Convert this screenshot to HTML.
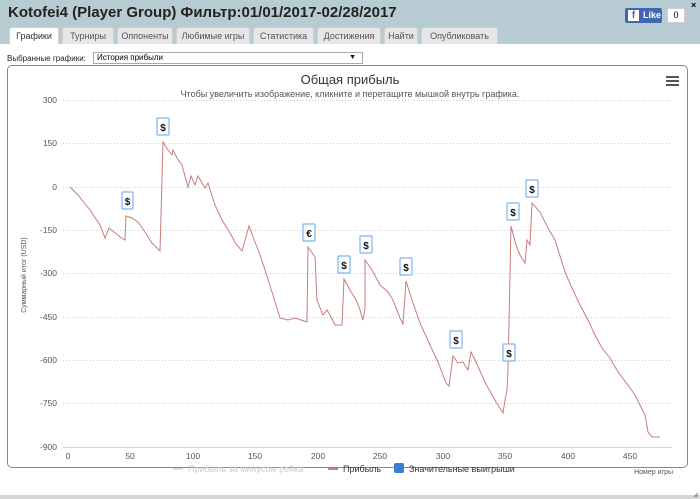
<!DOCTYPE html>
<html><head><meta charset="utf-8"><style>
*{margin:0;padding:0;box-sizing:border-box}
body{width:700px;height:499px;background:#fff;font-family:"Liberation Sans","DejaVu Sans",sans-serif;position:relative;overflow:hidden}
.hdr{position:absolute;left:0;top:0;width:700px;height:44px;background:#b7cbd3}
.title{position:absolute;left:8px;top:4px;font-size:15px;font-weight:bold;color:#222}
.tab{position:absolute;top:27px;height:17px;background:#e6e6e6;border:1px solid #d0d0d0;border-bottom:none;border-radius:3px 3px 0 0;font-size:9px;color:#555;text-align:center;line-height:16px}
.tab.a{background:#fff;color:#333;height:18px}
.fb{position:absolute;left:625px;top:8px;width:37px;height:15px;background:#4267b2;border-radius:2px;color:#fff;font-size:9px;font-weight:bold;line-height:15px;padding-left:18px}
.fb b{position:absolute;left:3px;top:2px;width:11px;height:11px;background:#fff;color:#4267b2;font-size:10px;text-align:center;line-height:12px}
.cnt{position:absolute;left:667px;top:8px;width:18px;height:15px;background:#fff;border:1px solid #ccc;font-size:9px;text-align:center;line-height:13px}
.sel{position:absolute;left:93px;top:52px;width:270px;height:12px;border:1px solid #aaa;font-size:8px;line-height:10px;padding-left:3px}
.panel{position:absolute;left:7px;top:65px;width:681px;height:403px;border:1px solid #888;border-radius:5px}
.bot{position:absolute;left:0;top:495px;width:700px;height:4px;background:#d6d6d6}
</style></head><body>
<div class="hdr"></div>
<div class="title">Kotofei4 (Player Group) Фильтр:01/01/2017-02/28/2017</div>
<div class="fb"><b>f</b>Like</div><div class="cnt">0</div>
<div style="position:absolute;left:691px;top:0;font-size:9px;font-weight:bold">×</div>
<div class="tab a" style="left:9px;width:50px">Графики</div>
<div class="tab" style="left:62px;width:52px">Турниры</div>
<div class="tab" style="left:117px;width:56px">Оппоненты</div>
<div class="tab" style="left:176px;width:74px">Любимые игры</div>
<div class="tab" style="left:253px;width:61px">Статистика</div>
<div class="tab" style="left:317px;width:64px">Достижения</div>
<div class="tab" style="left:384px;width:34px">Найти</div>
<div class="tab" style="left:421px;width:77px">Опубликовать</div>
<div style="position:absolute;left:7px;top:54px;font-size:8px;color:#222">Выбранные графики:</div>
<div class="sel">История прибыли<span style="position:absolute;right:6px;font-size:7px">▼</span></div>
<div class="panel"></div>
<div class="bot"></div>
<svg style="position:absolute;left:0;top:0" width="700" height="499" font-family="Liberation Sans, DejaVu Sans, sans-serif">
<text x="350" y="84" text-anchor="middle" font-size="13" fill="#333">Общая прибыль</text>
<text x="350" y="97" text-anchor="middle" font-size="9" fill="#555">Чтобы увеличить изображение, кликните и перетащите мышкой внутрь графика.</text>
<g fill="#555"><rect x="666" y="76" width="13" height="2"/><rect x="666" y="80" width="13" height="2"/><rect x="666" y="84" width="13" height="2"/></g>
<g stroke="#ccc" stroke-dasharray="1,2" stroke-width="1">
<line x1="63" y1="100.5" x2="672" y2="100.5"/><line x1="63" y1="143.5" x2="672" y2="143.5"/><line x1="63" y1="187.5" x2="672" y2="187.5"/><line x1="63" y1="230.5" x2="672" y2="230.5"/><line x1="63" y1="273.5" x2="672" y2="273.5"/><line x1="63" y1="317.5" x2="672" y2="317.5"/><line x1="63" y1="360.5" x2="672" y2="360.5"/><line x1="63" y1="403.5" x2="672" y2="403.5"/></g>
<line x1="63" y1="447.5" x2="672" y2="447.5" stroke="#ccd6eb"/>
<g font-size="8.5" fill="#555" text-anchor="end">
<text x="57" y="103">300</text><text x="57" y="146">150</text><text x="57" y="190">0</text><text x="57" y="233">-150</text><text x="57" y="276">-300</text><text x="57" y="320">-450</text><text x="57" y="363">-600</text><text x="57" y="406">-750</text><text x="57" y="450">-900</text></g>
<g font-size="8.5" fill="#555" text-anchor="middle">
<text x="68" y="459">0</text><text x="130" y="459">50</text><text x="193" y="459">100</text><text x="255" y="459">150</text><text x="318" y="459">200</text><text x="380" y="459">250</text><text x="443" y="459">300</text><text x="505" y="459">350</text><text x="568" y="459">400</text><text x="630" y="459">450</text></g>
<text x="26" y="275" font-size="7" fill="#555" text-anchor="middle" transform="rotate(-90 26 275)">Суммарный итог (USD)</text>
<text x="673" y="474" font-size="7" fill="#555" text-anchor="end">Номер игры</text>
<line x1="173" y1="469" x2="183" y2="469" stroke="#ddd" stroke-width="2"/>
<text x="188" y="472" font-size="9" fill="#ccc">Прибыль за минусом рейка</text>
<line x1="328" y1="469" x2="338" y2="469" stroke="#d08080" stroke-width="2"/>
<text x="343" y="472" font-size="9" fill="#333">Прибыль</text>
<rect x="394" y="463" width="10" height="10" rx="2" fill="#3a7bd5"/>
<text x="409" y="472" font-size="9" fill="#333">Значительные выигрыши</text>
<polyline fill="none" stroke="#c97b7b" stroke-width="1" points="70,187 78,195 90,210 100,225 105,238 109,228 114,232 120,237 125,240 126,216 132,218 138,222 145,232 152,243 160,251 163,142 168,150 172,155 173,150 177,158 182,165 188,187 191,176 195,185 198,176 205,188 208,183 215,205 222,220 230,233 236,244 242,251 249,226 255,242 260,255 265,270 272,292 280,318 288,320 295,318 301,320 307,322 308,247 315,257 317,300 323,315 327,310 330,315 335,325 342,325 344,279 350,290 356,300 360,310 363,320 365,309 365,260 372,270 380,285 388,292 393,300 400,318 403,324 406,281 412,300 420,323 430,345 438,362 446,383 449,386 453,356 458,363 463,362 468,370 471,352 476,362 480,371 486,384 496,402 503,413 505,400 507,390 508,370 511,226 516,245 520,255 525,263 527,240 530,245 532,203 540,212 548,228 555,240 565,272 572,288 580,305 588,320 595,335 602,348 610,358 618,372 628,385 635,395 640,405 645,415 648,432 652,437 660,437"/>
<g fill="#fff" stroke="#7cb5ec" stroke-width="1.2">
<rect x="122" y="192" width="11" height="17" rx="1"/><rect x="157" y="118" width="12" height="17" rx="1"/><rect x="303" y="224" width="12" height="17" rx="1"/><rect x="338" y="256" width="12" height="17" rx="1"/><rect x="360" y="236" width="12" height="17" rx="1"/><rect x="400" y="258" width="12" height="17" rx="1"/><rect x="450" y="331" width="12" height="17" rx="1"/><rect x="503" y="344" width="12" height="17" rx="1"/><rect x="507" y="203" width="12" height="17" rx="1"/><rect x="526" y="180" width="12" height="17" rx="1"/></g>
<g font-size="10" font-weight="bold" fill="#111" text-anchor="middle">
<text x="127.5" y="205">$</text><text x="163" y="131">$</text><text x="309" y="237">€</text><text x="344" y="269">$</text><text x="366" y="249">$</text><text x="406" y="271">$</text><text x="456" y="344">$</text><text x="509" y="357">$</text><text x="513" y="216">$</text><text x="532" y="193">$</text></g>
<path d="M694 497 L698 493 M696 497 L698 495" stroke="#888" stroke-width="1"/>
</svg>
</body></html>
